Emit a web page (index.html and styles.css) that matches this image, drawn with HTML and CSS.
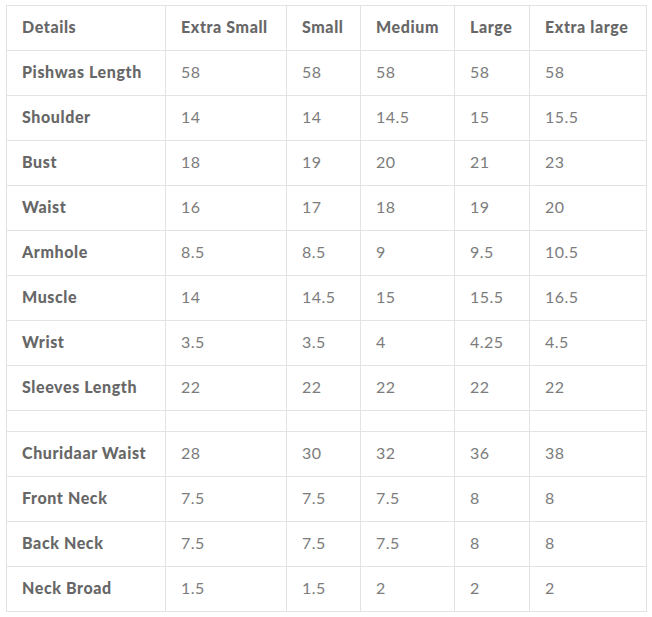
FILE: index.html
```html
<!DOCTYPE html>
<html>
<head>
<meta charset="utf-8">
<link rel="stylesheet" href="styles.css">
</head>
<body>
<div class="wrap">
<table class="size-table">
  <colgroup>
    <col class="c1"><col class="c2"><col class="c3"><col class="c4"><col class="c5"><col class="c6">
  </colgroup>
  <thead>
    <tr><th>Details</th><th>Extra Small</th><th>Small</th><th>Medium</th><th>Large</th><th>Extra large</th></tr>
  </thead>
  <tbody>
    <tr><th>Pishwas Length</th><td>58</td><td>58</td><td>58</td><td>58</td><td>58</td></tr>
    <tr><th>Shoulder</th><td>14</td><td>14</td><td>14.5</td><td>15</td><td>15.5</td></tr>
    <tr><th>Bust</th><td>18</td><td>19</td><td>20</td><td>21</td><td>23</td></tr>
    <tr><th>Waist</th><td>16</td><td>17</td><td>18</td><td>19</td><td>20</td></tr>
    <tr><th>Armhole</th><td>8.5</td><td>8.5</td><td>9</td><td>9.5</td><td>10.5</td></tr>
    <tr><th>Muscle</th><td>14</td><td>14.5</td><td>15</td><td>15.5</td><td>16.5</td></tr>
    <tr><th>Wrist</th><td>3.5</td><td>3.5</td><td>4</td><td>4.25</td><td>4.5</td></tr>
    <tr><th>Sleeves Length</th><td>22</td><td>22</td><td>22</td><td>22</td><td>22</td></tr>
    <tr class="spacer"><th></th><td></td><td></td><td></td><td></td><td></td></tr>
    <tr><th>Churidaar Waist</th><td>28</td><td>30</td><td>32</td><td>36</td><td>38</td></tr>
    <tr><th>Front Neck</th><td>7.5</td><td>7.5</td><td>7.5</td><td>8</td><td>8</td></tr>
    <tr><th>Back Neck</th><td>7.5</td><td>7.5</td><td>7.5</td><td>8</td><td>8</td></tr>
    <tr><th>Neck Broad</th><td>1.5</td><td>1.5</td><td>2</td><td>2</td><td>2</td></tr>
  </tbody>
</table>
</div>
</body>
</html>
```
FILE: styles.css
```css
html, body {
  margin: 0;
  padding: 0;
  background: #ffffff;
}
.wrap {
  padding: 5px 0 0 6px;
}
.size-table {
  border-collapse: collapse;
  table-layout: fixed;
  width: 640px;
  font-family: Lato, "Liberation Sans", sans-serif;
  font-size: 16px;
}
.c1 { width: 159px; }
.c2 { width: 121px; }
.c3 { width: 74px; }
.c4 { width: 94px; }
.c5 { width: 75px; }
.c6 { width: 117px; }
.size-table th,
.size-table td {
  border: 1px solid #e3e3e3;
  height: 45px;
  padding: 0 0 4px 15px;
  text-align: left;
  vertical-align: middle;
  box-sizing: border-box;
  white-space: nowrap;
}
.size-table th {
  font-weight: 900;
  color: #676767;
  letter-spacing: 0.6px;
}
.size-table td {
  font-weight: 400;
  color: #7c7c7c;
  letter-spacing: 0.5px;
}
.size-table thead th {
  padding-bottom: 4px;
}
.size-table .spacer th,
.size-table .spacer td {
  height: 21px;
  padding-bottom: 0;
}
```
